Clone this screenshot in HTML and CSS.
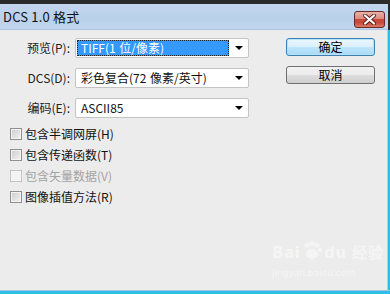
FILE: index.html
```html
<!DOCTYPE html>
<html lang="zh-CN">
<head>
<meta charset="utf-8">
<title>DCS 1.0 格式</title>
<link rel="stylesheet" href="styles.css">
</head>
<body>
<div class="window">
  <div class="topband"></div>
  <div class="titlebar">
    <span class="title">DCS 1.0 格式</span>
    <div class="close">
      <svg width="17" height="11" viewBox="0 0 17 11">
        <path d="M4 1.5 L13 9.5 M13 1.5 L4 9.5" stroke="#5a2020" stroke-width="4" stroke-linecap="round"/>
        <path d="M4 1.5 L13 9.5 M13 1.5 L4 9.5" stroke="#ffffff" stroke-width="2.2" stroke-linecap="round"/>
      </svg>
    </div>
  </div>
  <div class="client">
    <div class="main">
      <div class="form">
        <div class="row">
          <span class="label">预览(P):</span>
          <div class="select">
            <span class="value focused">TIFF(1 位/像素)</span>
            <span class="arrow"></span>
          </div>
        </div>
        <div class="row">
          <span class="label">DCS(D):</span>
          <div class="select">
            <span class="value">彩色复合(72 像素/英寸)</span>
            <span class="arrow"></span>
          </div>
        </div>
        <div class="row">
          <span class="label">编码(E):</span>
          <div class="select">
            <span class="value">ASCII85</span>
            <span class="arrow"></span>
          </div>
        </div>
      </div>
      <div class="buttons">
        <div class="btn default">确定</div>
        <div class="btn">取消</div>
      </div>
    </div>
    <div class="checks">
      <div class="check"><span class="box"></span><span>包含半调网屏(H)</span></div>
      <div class="check"><span class="box"></span><span>包含传递函数(T)</span></div>
      <div class="check disabled"><span class="box"></span><span>包含矢量数据(V)</span></div>
      <div class="check"><span class="box"></span><span>图像插值方法(R)</span></div>
    </div>
    <div class="watermark">
      <div class="wm-logo">Bai<svg class="paw" width="22" height="20" viewBox="0 0 22 20"><circle cx="6" cy="4" r="2.5"/><circle cx="11" cy="2.5" r="2.5"/><circle cx="16" cy="4" r="2.5"/><circle cx="19" cy="9" r="2.2"/><ellipse cx="11" cy="13" rx="6" ry="5"/></svg>du 经验</div>
      <div class="wm-url">jingyan.baidu.com</div>
    </div>
  </div>
  <div class="bottomline"></div>
</div>
</body>
</html>
```
FILE: styles.css
```css
* { box-sizing: border-box; }
html, body {
  margin: 0;
  padding: 0;
  width: 390px;
  height: 294px;
  overflow: hidden;
  background: #2a2a2a;
}
body {
  font-family: "Noto Sans CJK SC", "DejaVu Sans", sans-serif;
  font-size: 12px;
  color: #000;
}
.window {
  width: 390px;
  height: 294px;
  display: flex;
  flex-direction: column;
  background: #2a2a2a;
}
.topband {
  height: 4px;
  background: #2b2b2b;
  flex: none;
}
.titlebar {
  height: 26px;
  flex: none;
  margin-right: 2px;
  background: linear-gradient(#c2d7ee, #b9d0ea 60%, #c3d8ef);
  display: flex;
  align-items: center;
  justify-content: space-between;
  padding: 0 3px 0 3px;
  border-bottom: 1px solid #aec6e2;
}
.title {
  font-size: 13px;
  color: #111;
  line-height: 1;
  letter-spacing: 0.2px;
}
.close {
  width: 31px;
  height: 17px;
  margin-top: 5px;
  border: 1px solid #6a2a2a;
  border-radius: 3px;
  background: linear-gradient(#eab2a8 0%, #dd8a7e 45%, #c9493c 50%, #c9493c 70%, #dc7a62 100%);
  display: flex;
  align-items: center;
  justify-content: center;
}
.close svg { display: block; }
.client {
  flex: 1;
  position: relative;
  background: #ececec;
  border-right: 1px solid #c8c8c8;
  box-shadow: 2px 0 0 #2fbfe6;
  margin-right: 2px;
  padding-top: 8px;
}
.main {
  display: flex;
  align-items: flex-start;
}
.form {
  display: flex;
  flex-direction: column;
  gap: 10px;
}
.row {
  display: flex;
  align-items: center;
  gap: 5px;
}
.label {
  width: 70px;
  text-align: right;
  color: #222;
  line-height: 1;
}
.select {
  width: 174px;
  height: 20px;
  background: #fff;
  border: 1px solid #c4c4c4;
  border-radius: 2px;
  display: flex;
  align-items: center;
  padding: 1px;
}
.value {
  width: 152px;
  height: 16px;
  display: flex;
  align-items: center;
  padding-left: 4px;
  line-height: 1;
  color: #111;
  word-spacing: 1px;
}
.value.focused {
  background: #3399ff;
  color: #fff;
  outline: 1px dotted #222;
  outline-offset: -1px;
}
.arrow {
  flex: 1;
  display: flex;
  justify-content: center;
  align-items: center;
}
.arrow::before {
  content: "";
  border-left: 4px solid transparent;
  border-right: 4px solid transparent;
  border-top: 4px solid #000;
  margin-left: 2px;
}
.buttons {
  margin-left: 37px;
  display: flex;
  flex-direction: column;
  gap: 10px;
}
.btn {
  width: 89px;
  height: 18px;
  border: 1px solid #707070;
  border-radius: 3px;
  background: linear-gradient(#f2f2f2 0%, #ebebeb 50%, #dddddd 51%, #cfcfcf 100%);
  display: flex;
  align-items: center;
  justify-content: center;
  line-height: 1;
  color: #000;
  font-size: 12px;
}
.btn.default {
  border-color: #3c7fb1;
  background: linear-gradient(#eaf6fd 0%, #d9f0fc 50%, #bee6fd 51%, #a7d9f5 100%);
  box-shadow: inset 0 0 0 1px #b9e3fa;
}
.checks {
  margin-top: 5px;
  display: flex;
  flex-direction: column;
}
.check {
  height: 21px;
  display: flex;
  align-items: center;
  padding-left: 10px;
  gap: 3px;
  line-height: 1;
  color: #111;
}
.box {
  width: 12px;
  height: 12px;
  border: 1px solid #8e8f8f;
  background: linear-gradient(135deg, #cbcbcb, #f4f4f4);
  box-shadow: inset 0 0 0 1px #f4f4f4;
  flex: none;
}
.check.disabled { color: #a3a3a3; }
.check.disabled .box {
  border-color: #c5c5c5;
  background: #f4f4f4;
  box-shadow: none;
}
.watermark {
  position: absolute;
  left: 272px;
  top: 211px;
  color: #f5f5f5;
}
.wm-logo {
  display: flex;
  align-items: flex-end;
  font-family: "DejaVu Sans", sans-serif;
  font-size: 15px;
  font-weight: bold;
  line-height: 16px;
  letter-spacing: 0.5px;
}
.paw { fill: #f5f5f5; margin: 0 1px 0 1px; }
.wm-url {
  margin-top: 6px;
  font-family: "DejaVu Sans", sans-serif;
  font-size: 9px;
  line-height: 12px;
}
.bottomline {
  height: 4px;
  flex: none;
  border-top: 1px solid #9fc3e0;
  background: #2fbfe6;
}
```
